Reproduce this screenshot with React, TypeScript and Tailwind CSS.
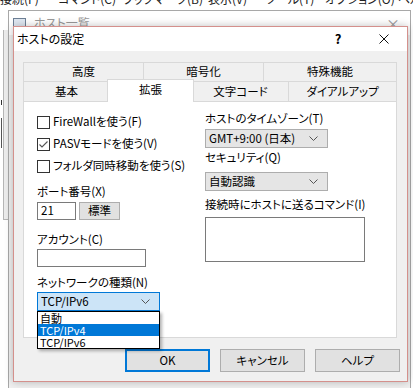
import React from 'react';

const jp = "font-['Noto_Sans_CJK_JP','Noto_Sans',sans-serif] [font-feature-settings:'palt']";

const Chevron = () => (
  <svg width="9" height="5" viewBox="0 0 9 5">
    <path d="M0.5 0.5 L4.5 4.5 L8.5 0.5" fill="none" stroke="#555" strokeWidth="1" />
  </svg>
);

const CheckRow = ({ label, checked }: { label: string; checked?: boolean }) => (
  <div className="flex h-[22px] items-center">
    <span className="flex h-[13px] w-[13px] items-center justify-center border border-[#333] bg-white">
      {checked && (
        <svg width="11" height="11" viewBox="0 0 11 11">
          <path d="M1.5 5.5 L4 8 L9.5 2.5" fill="none" stroke="#555" strokeWidth="1.1" />
        </svg>
      )}
    </span>
    <span className="ml-[3px]">{label}</span>
  </div>
);

const Select = ({ value, w }: { value: string; w: string }) => (
  <div className={`flex h-[19px] ${w} items-center justify-between border border-[#adadad] bg-[#e5e5e5] pl-[3px] pr-[9px]`}>
    <span>{value}</span>
    <Chevron />
  </div>
);

const Tab = ({ label, w, last }: { label: string; w: string; last?: boolean }) => (
  <div className={`flex ${w} items-center justify-center border-t border-l border-[#d9d9d9] ${last ? 'border-r' : ''}`}>
    {label}
  </div>
);

const menuItems = [
  { label: '接続(F)', w: 'w-[58px]' },
  { label: 'コマンド(C)', w: 'w-[65px]' },
  { label: 'ブックマーク(B)', w: 'w-[85px]' },
  { label: '表示(V)', w: 'w-[57px]' },
  { label: 'ツール(T)', w: 'w-[60px]' },
  { label: 'オプション(O)', w: 'w-[73px]' },
  { label: 'ヘルプ(H)', w: 'w-[60px]' },
];

export default function App() {
  return (
    <div className={`relative h-[388px] w-[413px] overflow-hidden bg-white text-[11.5px] text-black ${jp}`}>
      {/* main window menu bar, mostly scrolled off */}
      <div className="h-[10px] overflow-hidden">
        <div className="-mt-[9px] flex whitespace-nowrap text-[12px] leading-[16px] text-[#222]">
          {menuItems.map(m => (
            <span key={m.label} className={`${m.w} shrink-0`}>{m.label}</span>
          ))}
        </div>
      </div>

      {/* bits of the main window on the left */}
      <div className="absolute left-[3px] top-[30px] h-[190px] w-[6px] border-l border-b border-[#b5b5b5] bg-[#ececec]" />
      <div className="absolute left-[1px] top-[100px] h-[5px] w-[1px] bg-[#333]" />
      <div className="absolute left-[1px] top-[118px] h-[30px] w-[1px] bg-[#555]" />

      {/* host list window behind */}
      <div className="absolute left-[8px] top-[10px] h-[380px] w-[403px] border border-[#a8a8a8] bg-[#f0f0f0]">
        <div className="flex h-[24px] items-center bg-white pl-[4px] pr-[10px]">
          <span className="h-[10px] w-[13px] border border-[#6d7f95] bg-[#dfe7f1]" />
          <span className="ml-[8px] text-[12px] text-[#999]">ホスト一覧</span>
          <span className="ml-auto text-[14px] leading-none text-[#999]">×</span>
        </div>
      </div>

      {/* dialog */}
      <div className="absolute left-[13px] top-[26px] flex h-[356px] w-[395px] flex-col border border-[#d4908c] bg-[#f0f0f0] shadow-[0_0_8px_rgba(0,0,0,0.25)]">
        <div className="flex h-[24px] shrink-0 items-center bg-white text-[12px]">
          <span className="pl-[3px]">ホストの設定</span>
          <span className="ml-auto flex w-[46px] justify-center text-[13px] font-bold">?</span>
          <span className="flex w-[46px] justify-center">
            <svg width="10" height="10" viewBox="0 0 10 10">
              <path d="M0.5 0.5 L9.5 9.5 M9.5 0.5 L0.5 9.5" stroke="#111" strokeWidth="1" />
            </svg>
          </span>
        </div>

        <div className="flex flex-1 flex-col pl-[9px] pr-[10px] pt-[11px]">
          {/* tab rows */}
          <div className="flex h-[19px]">
            <Tab label="高度" w="w-[120px]" />
            <Tab label="暗号化" w="w-[120px]" />
            <Tab label="特殊機能" w="w-[134px]" last />
          </div>
          <div className="flex h-[20px] items-start">
            <div className="flex h-[20px] w-[86px] items-center justify-center border-t border-l border-[#d9d9d9]">基本</div>
            <div className="relative z-10 -mx-[2px] -mt-[2px] flex h-[23px] w-[87px] items-center justify-center border border-b-0 border-[#d9d9d9] bg-white pb-[2px]">拡張</div>
            <div className="flex h-[20px] w-[96px] items-center justify-center border-t border-l border-[#d9d9d9]">文字コード</div>
            <div className="flex h-[20px] w-[109px] items-center justify-center border-t border-l border-r border-[#d9d9d9]">ダイアルアップ</div>
          </div>

          {/* panel */}
          <div className="grid h-[237px] shrink-0 grid-cols-[168px_1fr] border border-[#d9d9d9] bg-white pl-[13px]">
            <div className="flex flex-col pt-[9px]">
              <CheckRow label="FireWallを使う(F)" />
              <CheckRow label="PASVモードを使う(V)" checked />
              <CheckRow label="フォルダ同時移動を使う(S)" />
              <div className="mt-[7px] flex h-[16px] items-center">ポート番号(X)</div>
              <div className="mt-[2px] flex gap-[3px]">
                <div className="flex h-[18px] w-[39px] items-center border border-[#7a7a7a] bg-white pl-[3px]">21</div>
                <div className="flex h-[18px] w-[41px] items-center justify-center border border-[#adadad] bg-[#e1e1e1]">標準</div>
              </div>
              <div className="mt-[12px] flex h-[16px] items-center">アカウント(C)</div>
              <div className="mt-[1px] h-[18px] w-[109px] border border-[#7a7a7a] bg-white" />
              <div className="mt-[8px] flex h-[16px] items-center">ネットワークの種類(N)</div>
              <div className="relative mt-[1px] w-[123px]">
                <div className="flex h-[19px] items-center justify-between border border-[#0078d7] bg-[#cce4f7] pl-[3px] pr-[9px]">
                  <span>TCP/IPv6</span>
                  <Chevron />
                </div>
                <div className="absolute left-0 top-full z-20 flex w-[123px] flex-col border border-black bg-white text-[11px] leading-[12px] shadow-[2px_2px_3px_rgba(0,0,0,0.3)]">
                  <span className="h-[12px] overflow-hidden pl-[2px]">自動</span>
                  <span className="h-[12px] overflow-hidden bg-[#0078d7] pl-[2px] text-white">TCP/IPv4</span>
                  <span className="h-[12px] overflow-hidden pl-[2px]">TCP/IPv6</span>
                </div>
              </div>
            </div>

            <div className="flex flex-col pt-[9px]">
              <div className="flex h-[16px] items-center">ホストのタイムゾーン(T)</div>
              <div className="mt-[2px]"><Select value="GMT+9:00 (日本)" w="w-[123px]" /></div>
              <div className="mt-[2px] flex h-[16px] items-center">セキュリティ(Q)</div>
              <div className="mt-[6px]"><Select value="自動認識" w="w-[123px]" /></div>
              <div className="mt-[6px] flex h-[16px] items-center">接続時にホストに送るコマンド(I)</div>
              <div className="mt-[4px] h-[45px] w-[160px] border border-[#7a7a7a] bg-white" />
            </div>
          </div>

          {/* buttons */}
          <div className="-mr-[3px] mt-[11px] flex justify-end gap-[10px]">
            <div className="flex h-[23px] w-[85px] items-center justify-center border-2 border-[#0078d7] bg-[#e1e1e1]">OK</div>
            <div className="flex h-[23px] w-[85px] items-center justify-center border border-[#adadad] bg-[#e1e1e1]">キャンセル</div>
            <div className="flex h-[23px] w-[85px] items-center justify-center border border-[#adadad] bg-[#e1e1e1]">ヘルプ</div>
          </div>
        </div>
      </div>
    </div>
  );
}
